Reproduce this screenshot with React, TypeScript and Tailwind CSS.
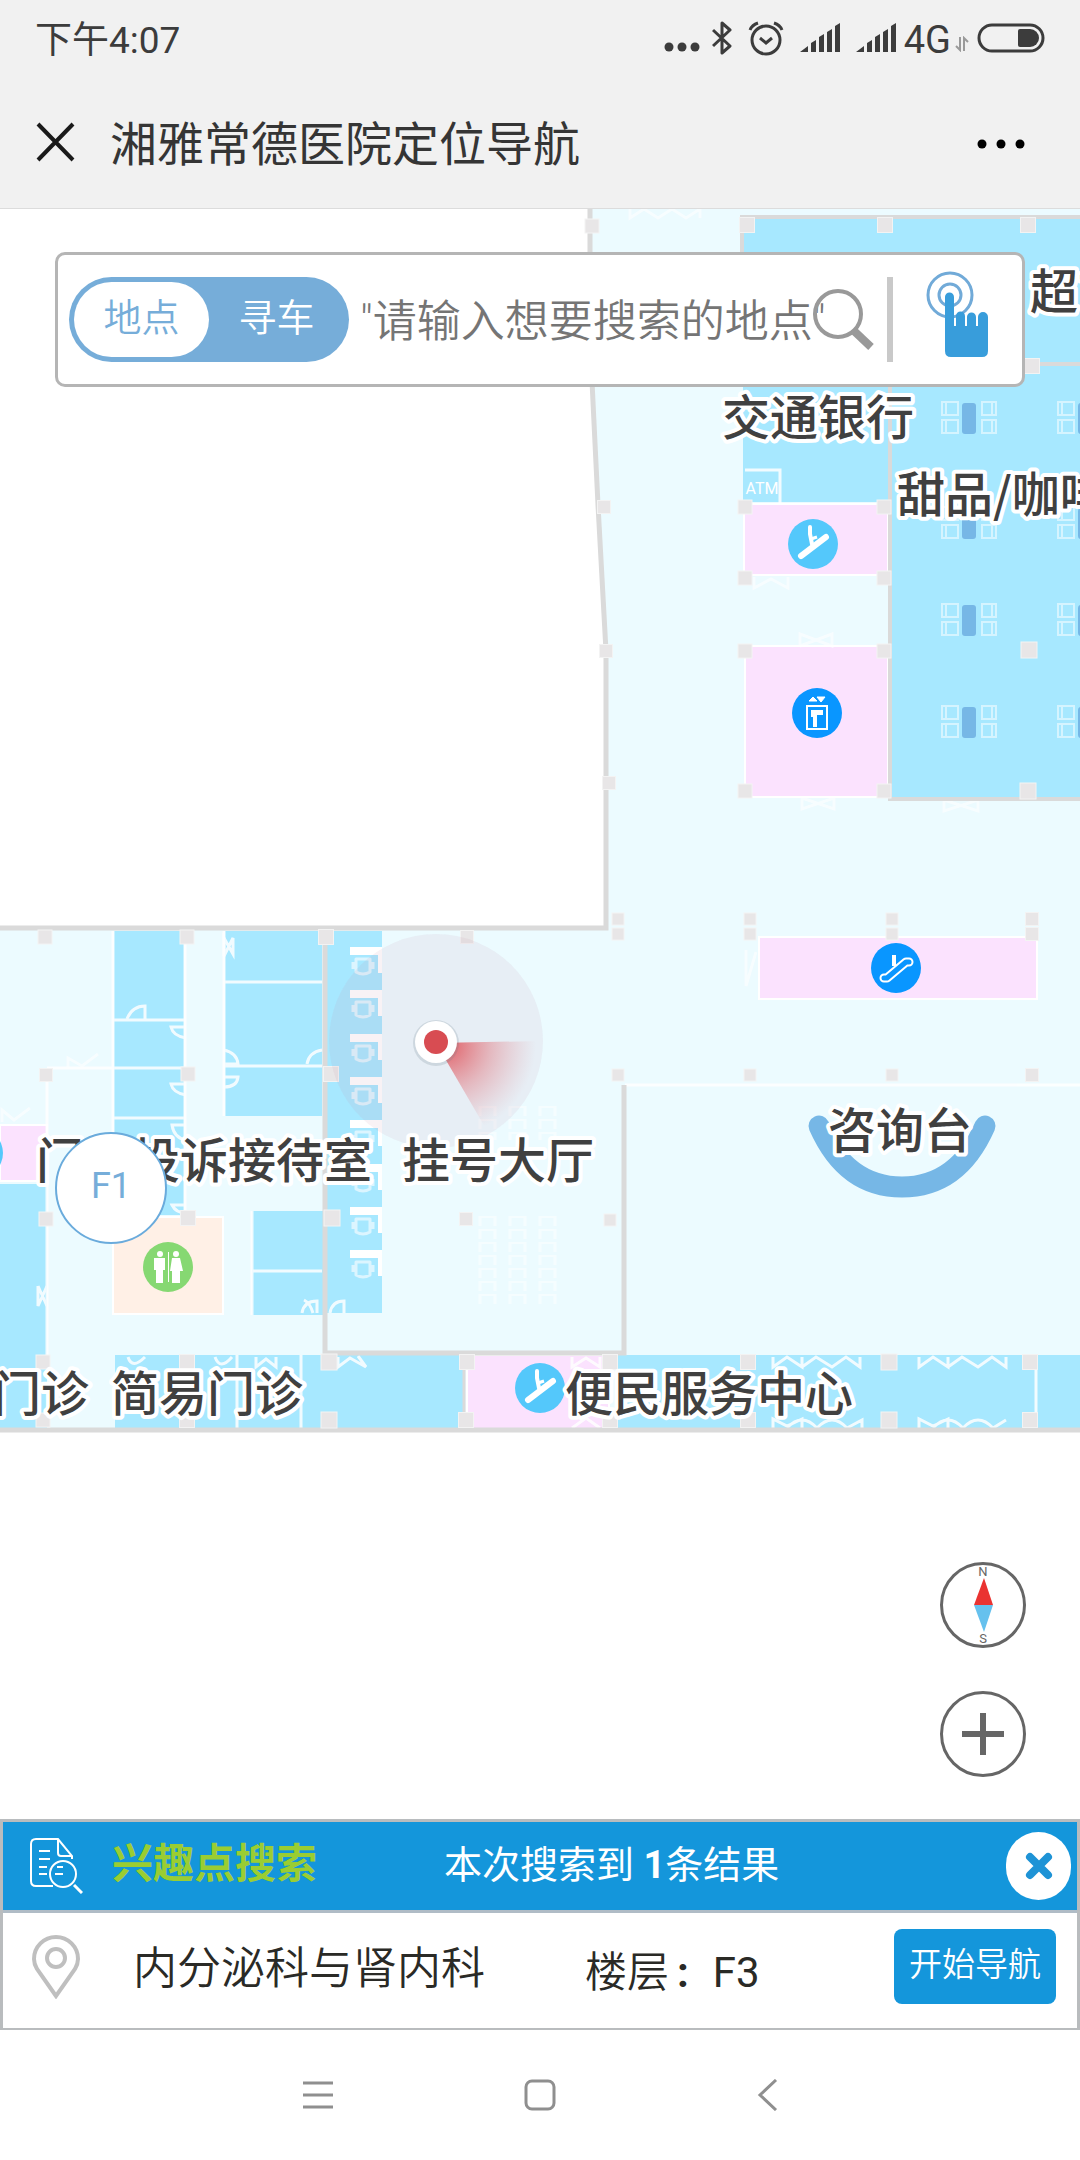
import { useState } from "react";

const FLOOR = "#ecfbff";
const ROOM = "#a7e8ff";
const PINK = "#fbe2fe";
const WALL = "#dadada";

// [x, y, width, height]
const rooms = [
  [743, 218, 337, 284],
  [892, 218, 188, 580],
  [114, 931, 70, 284],
  [225, 931, 97, 185],
  [327, 931, 55, 382],
  [0, 1184, 47, 245],
  [252, 1211, 72, 104],
  [115, 1355, 348, 74],
  [618, 1355, 462, 74],
];

const pinkRooms = [
  [744, 504, 144, 71],
  [745, 646, 143, 151],
  [759, 937, 278, 62],
  [0, 1125, 47, 56],
  [467, 1355, 142, 74],
];

// [center x, center y, size]
const pillars = [
  [592, 226, 14], [747, 225, 15], [885, 225, 15], [1028, 225, 15], [1032, 366, 15],
  [604, 507, 13], [606, 651, 13], [609, 783, 13],
  [745, 507, 14], [884, 507, 14], [745, 578, 14], [884, 578, 14],
  [745, 651, 14], [884, 651, 14], [745, 791, 14], [884, 791, 14],
  [1029, 650, 16], [1028, 791, 16],
  [618, 919, 12], [618, 934, 12], [750, 919, 12], [750, 934, 12],
  [892, 919, 12], [892, 934, 12], [1032, 919, 13], [1032, 934, 13],
  [618, 1075, 12], [750, 1075, 12], [892, 1075, 12], [1032, 1075, 13],
  [45, 937, 14], [187, 937, 14], [326, 937, 15], [467, 937, 13],
  [46, 1075, 13], [188, 1074, 14], [331, 1074, 15],
  [46, 1219, 14], [188, 1218, 15], [332, 1218, 16], [466, 1219, 13], [610, 1220, 12],
  [43, 1362, 14], [187, 1362, 15], [329, 1362, 16], [467, 1362, 15], [610, 1362, 15],
  [748, 1362, 15], [889, 1362, 16], [1030, 1362, 15],
  [43, 1420, 14], [187, 1420, 15], [329, 1420, 16], [466, 1420, 15], [610, 1420, 15],
  [748, 1420, 15], [889, 1420, 16], [1030, 1420, 15],
];

const labels: [string, number, number][] = [
  ["超市", 1030, 309],
  ["交通银行", 722, 435],
  ["甜品/咖啡", 897, 512],
  ["咨询台", 828, 1148],
  ["门诊投诉接待室", 36, 1178],
  ["挂号大厅", 402, 1178],
  ["门诊", -7, 1411],
  ["简易门诊", 111, 1411],
  ["便民服务中心", 565, 1411],
];

const diningTables = [
  [969, 418], [969, 523], [969, 620], [969, 722],
  [1085, 418], [1085, 523], [1085, 620], [1085, 722],
];

const desks = [951, 994, 1038, 1081, 1124, 1168, 1211, 1254];

function Escalator({ x, y, color }: { x: number; y: number; color: string }) {
  return (
    <g transform={`translate(${x} ${y})`}>
      <circle r="25" fill={color} />
      <path d="M-12 12L13-7" fill="none" stroke="#fff" strokeWidth="6" strokeLinecap="round" />
      <path d="M-3-17v7l2 10" fill="none" stroke="#fff" strokeWidth="4" strokeLinecap="round" />
      <path d="M-2-5l6-2" stroke="#fff" strokeWidth="3" />
    </g>
  );
}

function FloorMap() {
  return (
    <svg
      className="absolute inset-0 size-full"
      viewBox="0 209 1080 1610"
      preserveAspectRatio="xMidYMid slice"
      role="img"
      aria-label="一楼平面图"
    >
      <defs>
        <radialGradient id="heading" gradientUnits="userSpaceOnUse" cx="446" cy="1045" r="90">
          <stop offset="0.1" stopColor="#e0484f" stopOpacity="0.75" />
          <stop offset="0.5" stopColor="#e0686f" stopOpacity="0.4" />
          <stop offset="1" stopColor="#e0888f" stopOpacity="0" />
        </radialGradient>
      </defs>

      <path d="M590 209H1080V1430H0V929H606V651L598 505L590 340Z" fill={FLOOR} />
      {rooms.map(([x, y, w, h]) => (
        <rect key={`${x}-${y}`} x={x} y={y} width={w} height={h} fill={ROOM} />
      ))}
      {pinkRooms.map(([x, y, w, h]) => (
        <rect key={`${x}-${y}`} x={x} y={y} width={w} height={h} fill={PINK} stroke="#fff" strokeWidth="2" />
      ))}
      <rect x="113" y="1217" width="110" height="97" fill="#fff0e6" stroke="#fff" strokeWidth="2" />

      {/* partitions and doors */}
      <g fill="none" stroke="#fff" strokeWidth="3" opacity="0.85">
        <path d="M113 1020H184M47 1068H184M113 1118H184M224 982H322M224 1066H322M252 1271H322M47 1075V1355M113 931V1215M224 931V1116M252 1211V1315M185 931V1215M625 1085H1080M1036 1370V1414M237 1355V1428M301 1355V1428" />
        <path d="M127 1019Q132 1006 145 1006V1019M184 1027H171Q173 1036 186 1038M184 1084H171Q173 1093 186 1095M184 1125H172Q174 1138 186 1140M184 1205H172Q176 1213 186 1213" />
        <path d="M224 938L233 954V938L224 956ZM224 1050Q237 1053 238 1064H224M322 1050Q309 1052 307 1064M224 1077H238Q237 1087 224 1087M38 1286L47 1306M47 1286L38 1306V1286" />
        <path d="M302 1313Q304 1301 317 1301V1313M330 1313Q332 1301 344 1301V1313M313 1313Q310 1303 304 1300M128 1357Q132 1370 145 1357M215 1357Q220 1371 232 1357M256 1357V1367L266 1359L276 1367V1357" />
        <path d="M338 1357V1367L350 1358L366 1367L358 1356M572 1357V1367L586 1358L600 1367V1357M572 1428L586 1418L600 1428" />
        <path d="M773 1357V1367L787 1357L802 1367V1357M802 1367L816 1357L832 1367L846 1357L860 1367V1357M919 1357V1367L933 1357L948 1367V1357M948 1367L962 1357L978 1367L992 1357L1006 1367V1357" />
        <path d="M773 1428V1419L787 1426L802 1419V1428M787 1428Q802 1412 817 1428Q832 1412 847 1428L862 1420V1428M919 1428V1419L933 1426L948 1419V1428M933 1428Q948 1412 963 1428Q978 1412 993 1428L1006 1420" />
        <path d="M630 209V218L644 209L658 218L672 209L686 218L700 209V218M754 577V588L771 579L788 588V577M800 646V634L832 646V634L800 646M802 798V809L834 798V809L802 798M944 800V811L978 800V811L944 800M746 950V986L756 952M68 1068V1058L82 1066L98 1054M2 1122V1110L14 1120L30 1108" opacity="0.7" />
        <path d="M745 470H780V503" />
      </g>
      <text x="762" y="494" textAnchor="middle" fontSize="16" fill="#fff" fontFamily="Roboto, sans-serif">ATM</text>

      {/* walls */}
      <g fill="none" stroke={WALL} strokeWidth="5">
        <path d="M590 209V340L598 505L606 651V928H0" />
        <path d="M742 252V217H1080M890 386V799H1080M1040 364H1080" strokeWidth="4" />
        <path d="M325 930V1353H624V1085" />
        <path d="M0 1430H1080" />
        <path d="M464 1357V1428" strokeWidth="3" />
      </g>

      {/* dining tables */}
      {diningTables.map(([x, y]) => (
        <g key={`${x}-${y}`} transform={`translate(${x} ${y})`}>
          <rect x="-7" y="-15" width="14" height="31" rx="3" fill="#76b7e6" />
          <path
            d="M-27-16h16v13h-16zM-27 2h16v13h-16zM-23-16v13M-23 2v13M13-16h14v13h-14zM13 2h14v13h-14zM23-16v13M23 2v13"
            fill="none"
            stroke="#d5f4ff"
            strokeWidth="2"
          />
        </g>
      ))}

      {/* registration desks */}
      {desks.map((y) => (
        <g key={y} transform={`translate(350 ${y})`}>
          <path d="M0-4H32V22H28V4H0Z" fill="#fff" />
          <path d="M6 8H20V21Q13 25 6 21ZM3 11V18M23 11V18" fill="none" stroke="#dcf5ff" strokeWidth="3" strokeLinejoin="round" />
        </g>
      ))}

      {/* waiting seats */}
      {[480, 510, 540].map((x) => (
        <g key={x} fill="none" stroke="#fff" opacity="0.5">
          <path d={`M${x} 1106V1140M${x + 15} 1106V1140M${x} 1216V1304M${x + 15} 1216V1304`} strokeWidth="3" strokeDasharray="10 3" />
          <path d={`M${x + 8} 1106V1140M${x + 8} 1216V1304`} strokeWidth="14" strokeDasharray="2 11" />
        </g>
      ))}

      {pillars.map(([x, y, s]) => (
        <rect key={`${x}-${y}`} x={x - s / 2} y={y - s / 2} width={s} height={s} fill="#e8e6e7" stroke="#f3f3f3" strokeWidth="1" />
      ))}

      <path d="M819 1126Q846 1187 902 1187Q958 1187 985 1126" fill="none" stroke="#76b7e6" strokeWidth="21" strokeLinecap="round" />

      <Escalator x={813} y={544} color="#54c8fb" />
      <Escalator x={540} y={1388} color="#54c8fb" />
      <circle cx="-22" cy="1153" r="25" fill="#54c8fb" />

      <g transform="translate(817 713)">
        <circle r="25" fill="#0996ff" />
        <path d="M-10-7H10V16H-10Z" fill="none" stroke="#fff" strokeWidth="2" />
        <path d="M-8-12l4-4 4 4zM0-16h8l-4 5z" fill="#fff" stroke="#fff" strokeWidth="1" />
        <path d="M-6-3H6V2H0V14H-4V4H-6Z" fill="#fff" />
      </g>

      <g transform="translate(896 968)">
        <circle r="25" fill="#0996ff" />
        <path d="M-12 10h3L10-6h3" fill="none" stroke="#fff" strokeWidth="9" strokeLinecap="round" strokeLinejoin="round" />
        <path d="M-12 10h3L10-6h3" fill="none" stroke="#0996ff" strokeWidth="5" strokeLinecap="round" strokeLinejoin="round" />
        <path d="M-2-13v11" stroke="#fff" strokeWidth="4" />
      </g>

      <g transform="translate(168 1267)">
        <circle r="25" fill="#86d872" />
        <g fill="#fff">
          <circle cx="-8" cy="-13" r="3" />
          <circle cx="8" cy="-13" r="3" />
          <path d="M-14-9H-3V3H-5V16H-12V3H-14ZM4-9H12L15 4H12V16H4V4H2Z" />
          <path d="M0-15H1V15H0Z" />
        </g>
      </g>

      {/* current position */}
      <circle cx="436" cy="1041" r="107" fill="#f0a0b0" fillOpacity="0.08" />
      <circle cx="436" cy="1041" r="107" fill="#a0a0b8" fillOpacity="0.06" />
      <path d="M436 1043L543 1041A107 107 0 0 1 489 1134Z" fill="url(#heading)" />
      <circle cx="436" cy="1043" r="23" fill="#6b7c88" fillOpacity="0.2" />
      <circle cx="436" cy="1042" r="21" fill="#fff" />
      <circle cx="436" cy="1042" r="12" fill="#d84c52" />

      <g
        fontFamily='"Noto Sans CJK SC", sans-serif'
        fontSize="48"
        fontWeight="500"
        fill="#404040"
        stroke="#fff"
        strokeWidth="8"
        strokeLinejoin="round"
        paintOrder="stroke"
      >
        {labels.map(([name, x, y]) => (
          <text key={`${name}-${x}`} x={x} y={y}>{name}</text>
        ))}
      </g>
    </svg>
  );
}

function Signal() {
  return (
    <svg className="h-[30px] w-10" viewBox="0 0 40 30" fill="#3c3c3c" aria-hidden="true">
      <path d="M0 29L8 23V29ZM11 20L16 17V29H11ZM19 14L24 11V29H19ZM27 9L32 6V29H27ZM35 3L40 0V29H35Z" />
    </svg>
  );
}

function StatusBar() {
  return (
    <div className="flex h-[76px] items-center justify-between px-[35px] text-[#3c3c3c]">
      <span className="pt-1 text-[37px] leading-none">下午4:07</span>
      <div className="flex items-center" aria-hidden="true">
        <svg className="h-9 w-9" viewBox="0 0 36 36" fill="#3c3c3c">
          <circle cx="5" cy="27" r="4.5" />
          <circle cx="18" cy="27" r="4.5" />
          <circle cx="31" cy="27" r="4.5" />
        </svg>
        <svg className="ml-3 h-9 w-5" viewBox="0 0 20 36" fill="none" stroke="#3c3c3c" strokeWidth="3">
          <path d="M1 10L18 26L10 33V3L18 10L1 26" strokeLinejoin="round" />
        </svg>
        <svg className="ml-4 h-9 w-9" viewBox="0 0 36 36" fill="none" stroke="#3c3c3c" strokeWidth="3">
          <circle cx="18" cy="20" r="14" />
          <path d="M12 18L18 23L24 18M2 10Q4 5 10 3M34 10Q32 5 26 3" />
        </svg>
        <div className="ml-4 flex gap-4">
          <Signal />
          <Signal />
        </div>
        <span className="ml-2 pt-1 text-[38px] leading-none">4G</span>
        <svg className="ml-1 mt-3 h-4 w-[14px]" viewBox="0 0 14 16" fill="none" stroke="#9a9a9a" strokeWidth="2">
          <path d="M5 1V14L1 10M9 15V2L13 6" />
        </svg>
        <svg className="ml-2 h-[30px] w-[68px]" viewBox="0 0 68 30">
          <rect x="2" y="2" width="64" height="26" rx="13" fill="none" stroke="#3c3c3c" strokeWidth="3" />
          <path d="M43 6H53A9 9 0 0 1 53 24H43Q41 24 41 22V8Q41 6 43 6Z" fill="#3c3c3c" />
        </svg>
      </div>
    </div>
  );
}

function TitleBar() {
  return (
    <div className="flex h-[132px] items-center pl-9 pr-[54px]">
      <button type="button" aria-label="关闭">
        <svg className="size-10" viewBox="0 0 40 40" fill="none" stroke="#1a1a1a" strokeWidth="4">
          <path d="M2 2L37 38M37 2L2 38" />
        </svg>
      </button>
      <h1 className="ml-[34px] pt-1 text-[47px] leading-none text-[#353535]">湘雅常德医院定位导航</h1>
      <button type="button" aria-label="更多" className="ml-auto pt-1">
        <svg className="h-3 w-[50px]" viewBox="0 0 50 12" fill="#000">
          <circle cx="6" cy="6" r="4.5" />
          <circle cx="25" cy="6" r="4.5" />
          <circle cx="44" cy="6" r="4.5" />
        </svg>
      </button>
    </div>
  );
}

function SearchBar() {
  const [mode, setMode] = useState("place");
  const active = "bg-white text-[#76add9]";
  const idle = "text-white";

  return (
    <form className="relative mx-[55px] mt-[43px] flex h-[135px] items-center rounded-[10px] border-[3px] border-[#b5b5b5] bg-white pl-[11px]">
      <div className="flex h-[85px] w-[280px] rounded-full bg-[#76add9] p-[5px] text-[38px] font-[350] leading-none">
        <button
          type="button"
          className={`flex-1 rounded-full pb-1 ${mode === "place" ? active : idle}`}
          onClick={() => setMode("place")}
        >
          地点
        </button>
        <button
          type="button"
          className={`flex-1 rounded-full pb-1 ${mode === "car" ? active : idle}`}
          onClick={() => setMode("car")}
        >
          寻车
        </button>
      </div>
      <div className="relative flex h-[85px] flex-1 items-center pl-[11px]">
        <input
          type="text"
          aria-label="搜索地点"
          placeholder={'"请输入想要搜索的地点"'}
          className="w-full min-w-0 pt-1 text-[44px] font-[350] leading-none text-[#333] outline-none placeholder:text-[#757575]"
        />
        <button type="submit" aria-label="搜索" className="absolute right-3 top-3">
          <svg className="size-[62px]" viewBox="0 0 62 62" fill="none" stroke="#999">
            <circle cx="25" cy="25" r="23" strokeWidth="4" />
            <path d="M40 41L58 58" strokeWidth="8" />
          </svg>
        </button>
      </div>
      <div className="h-[85px] w-[6px] bg-[#c9c9c9]" />
      <button type="button" aria-label="选择位置" className="flex w-[129px] justify-center pb-3">
        <svg className="h-[86px] w-[63px]" viewBox="0 0 63 86" fill="none">
          <circle cx="24" cy="24" r="22" stroke="#71aad8" strokeWidth="3" />
          <circle cx="24" cy="24" r="11" stroke="#71aad8" strokeWidth="3" />
          <path
            d="M19 26A4 4 0 0 1 28 26V55H30V45A4 4 0 0 1 39 45V55H41V46A4 4 0 0 1 50 46V55H52V46A4 4 0 0 1 62 46V80Q62 86 56 86H25Q19 86 19 80Z"
            fill="#389ddb"
          />
        </svg>
      </button>
    </form>
  );
}

function MapControls() {
  return (
    <div className="absolute bottom-[42px] right-[54px] flex flex-col gap-[43px]">
      <button type="button" aria-label="指南针" className="flex size-[86px] flex-col items-center justify-between rounded-full border-[3px] border-[#666] bg-white text-[13px] leading-[13px] text-[#666]">
        <span>N</span>
        <svg className="h-[54px] w-[19px]" viewBox="0 0 19 54" aria-hidden="true">
          <path d="M0 27L10 0L19 27Z" fill="#ea3331" />
          <path d="M0 27L10 54L19 27Z" fill="#66c1ee" />
        </svg>
        <span>S</span>
      </button>
      <button type="button" aria-label="放大" className="flex size-[86px] items-center justify-center rounded-full border-[3px] border-[#666] bg-white">
        <svg className="size-[42px]" viewBox="0 0 42 42" stroke="#666" strokeWidth="6">
          <path d="M21 0V42M0 21H42" />
        </svg>
      </button>
    </div>
  );
}

function ResultPanel() {
  return (
    <section className="border-x-[3px] border-b-2 border-t-[3px] border-[#b9bcbe] bg-white">
      <div className="flex h-[91px] items-center border-b-[3px] border-[#b0bcc6] bg-[#1496db] pl-[27px] pr-[6px] text-white">
        <svg className="h-14 w-[53px] shrink-0" viewBox="0 0 53 56" fill="none" stroke="#fff" strokeWidth="2" aria-hidden="true">
          <path d="M23 48H6Q1 48 1 43V6Q1 1 6 1H28L42 18V21M28 1V15Q28 18 31 18H42" />
          <path d="M9 13H20M9 21H20M9 29H17M9 36H17M27 29H33M25 36H33" />
          <circle cx="33" cy="36" r="13" />
          <path d="M44 47L52 55" strokeWidth="3" />
        </svg>
        <h2 className="ml-[29px] w-[332px] pb-1 text-[41px] font-bold leading-none text-[#9acd32]">兴趣点搜索</h2>
        <p className="pb-[2px] text-[38px] leading-none">
          本次搜索到 <b>1</b>条结果
        </p>
        <button type="button" aria-label="关闭结果" className="ml-auto flex h-[68px] w-[65px] items-center justify-center rounded-full bg-white">
          <svg className="size-7" viewBox="0 0 28 28" stroke="#1e93d6" strokeWidth="8" strokeLinecap="round">
            <path d="M5 5L23 23M23 5L5 23" />
          </svg>
        </button>
      </div>
      <ul>
        <li className="flex items-center pb-6 pl-[29px] pr-[21px] pt-4 text-[#2a2a26]">
          <svg className="h-16 w-12 shrink-0" viewBox="0 0 48 64" fill="none" stroke="#bfbfbf" strokeWidth="4" aria-hidden="true">
            <path d="M24 61L5 34Q2 29 2 24A22 22 0 0 1 46 24Q46 29 43 34Z" />
            <circle cx="24" cy="23" r="9" />
          </svg>
          <span className="ml-[53px] w-[452px] pt-1 text-[44px] font-[350] leading-[48px]">内分泌科与肾内科</span>
          <span className="flex gap-6 pt-3 text-[42px] leading-[48px]">
            <span className="font-[350]">楼层<b className="pl-2 font-bold">:</b></span>
            <span>F3</span>
          </span>
          <button type="button" className="ml-auto h-[75px] w-[162px] rounded-lg bg-[#1496db] pb-1 text-[33px] font-[350] leading-none text-white">
            开始导航
          </button>
        </li>
      </ul>
    </section>
  );
}

function SystemNav() {
  return (
    <nav className="flex h-[130px] items-center justify-center gap-[190px] bg-white" aria-label="系统导航">
      <button type="button" aria-label="菜单">
        <svg className="size-8" viewBox="0 0 32 32" fill="none" stroke="#8f8f8f" strokeWidth="3">
          <path d="M1 4H31M1 16H31M1 28H31" />
        </svg>
      </button>
      <button type="button" aria-label="主屏幕">
        <svg className="size-8" viewBox="0 0 32 32" fill="none" stroke="#8f8f8f" strokeWidth="3">
          <rect x="2" y="2" width="28" height="28" rx="6" />
        </svg>
      </button>
      <button type="button" aria-label="返回">
        <svg className="size-8" viewBox="0 0 32 32" fill="none" stroke="#8f8f8f" strokeWidth="3">
          <path d="M30 1L14 16L30 31" />
        </svg>
      </button>
    </nav>
  );
}

export default function App() {
  return (
    <div className="flex min-h-screen flex-col bg-white font-[Roboto,'Noto_Sans_CJK_SC',sans-serif]">
      <header className="border-b border-[#dcdcdc] bg-[#f1f1f1]">
        <StatusBar />
        <TitleBar />
      </header>
      <main className="relative flex flex-1 flex-col overflow-hidden">
        <FloorMap />
        <SearchBar />
        <button
          type="button"
          className="absolute bottom-[575px] left-[55px] size-28 rounded-full border-2 border-[#6aabdc] bg-white pb-1 text-4xl text-[#76add9]"
        >
          F1
        </button>
        <MapControls />
      </main>
      <ResultPanel />
      <SystemNav />
    </div>
  );
}
